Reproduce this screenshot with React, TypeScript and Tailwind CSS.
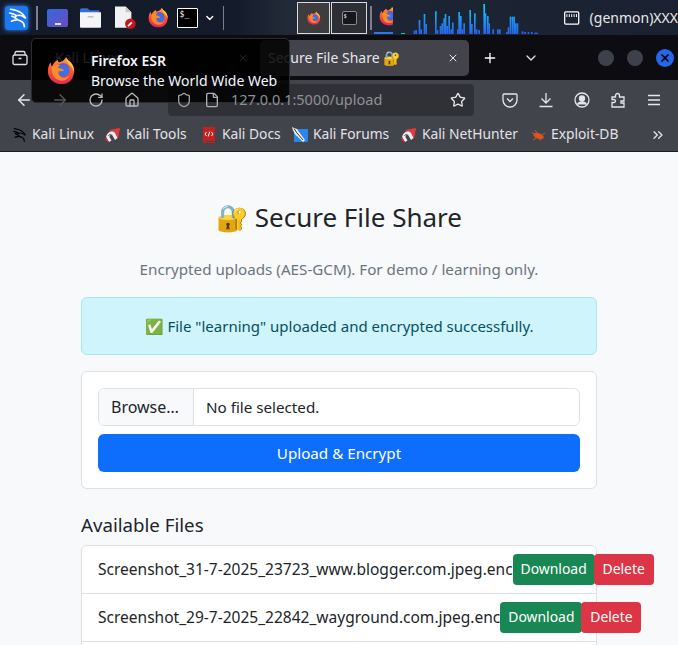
import { ArrowLeft, ArrowRight, ChevronDown, ChevronsRight, File, Home, Plus, RotateCw, Shield, Star, X } from 'lucide-react'

const bars: [number, number][] = [
  [128, 92], [133, 90], [143, 60], [148, 88], [158, 42], [163, 72], [192, 34], [197, 90], [206, 78], [211, 70],
  [217, 55], [221, 42], [226, 78], [232, 48], [238, 88], [243, 68], [258, 88], [262, 36], [267, 48], [272, 88],
  [277, 70], [295, 30], [300, 72], [309, 40], [314, 88], [322, 90], [337, 12], [341, 40], [348, 48], [352, 70],
  [364, 88], [378, 88], [384, 88], [405, 96], [410, 82], [416, 50], [422, 50], [427, 50], [432, 70], [437, 70],
  [452, 94], [460, 96], [470, 96], [480, 96], [490, 98], [495, 98],
]

const files = [
  'Screenshot_31-7-2025_23723_www.blogger.com.jpeg.enc',
  'Screenshot_29-7-2025_22842_wayground.com.jpeg.enc',
]

function Firefox({ size }: { size: number }) {
  return (
    <svg width={size} height={size} viewBox="0 0 32 32" className="shrink-0">
      <defs>
        <linearGradient id="fxBody" x1="0.5" y1="0" x2="0.4" y2="1">
          <stop offset="0" stopColor="#ffa52e" />
          <stop offset="0.45" stopColor="#ff5a2c" />
          <stop offset="1" stopColor="#e0245e" />
        </linearGradient>
      </defs>
      <path d="M21 1c1 3 3 4 5 6 4 4 5 10 3 15-2 6-7 9-13 9C8 31 1 25 1 17c0-4 1-7 3-10 0 2 .5 3.500 1.500 4.500C7 8 9 6 12 4.500c0 1.500.5 2 1.500 2.500C17 6 20 4 21 1z" fill="url(#fxBody)" />
      <path d="M21 1c1 3 3 4 5 6 3 3 4 7 4 11-1-3-3-7-6-9-1-2-3-4-3-8z" fill="#ffc53a" />
      <circle cx="17.500" cy="15.500" r="7.500" fill="#3f6fe0" />
      <path d="M17.500 8a7.500 7.500 0 0 1 7 5c-3-3-7-3.500-10-2.500-1-1-.5-2 3-2.500z" fill="#7a4bd0" />
      <path d="M5.500 11.500c3-1.500 6-2 9-1-1.500.5-2.500 1.500-2.500 2.500 3 .5 5.500 1.500 7 3-2 1-4 1-6 .5-1.500 4 2 7.500 6 7.500 2 0 4-1 6-3-1.500 4-5.500 7-10 6C8 26.500 4 19 5.500 11.500z" fill="#ff8a2a" />
    </svg>
  )
}

function KaliDragon({ className }: { className: string }) {
  return (
    <svg viewBox="0 0 24 24" fill="none" stroke="currentColor" strokeWidth="1.800" strokeLinecap="round" className={className}>
      <path d="M5 2.500c4 .5 8 1.500 11 3.500 2.500 1.500 4 3.500 5.500 6.500-2-2-4-3.500-7-3.500-2.500 0-4.500 1-4.500 2.500 0 2 3.500 2.500 6.500 4 2.500 1.200 3.500 3 3.500 6" />
      <path d="M4 6.500c3 .5 5.500 1.500 7.500 3M6.500 10c1 .3 2 .7 3 1.500M11 14.500c-2-.2-3.500 0-5 1" />
    </svg>
  )
}

function KaliTool() {
  return (
    <svg width="16" height="16" viewBox="0 0 16 16" className="shrink-0">
      <path d="M4 3l11-2-2 11-4-5z" fill="#de3b3f" />
      <path d="M1 10c1-5 6-7 9-4l2.500 5-2.500 2-2.500-4.500c-1-1-3-.5-3 1.500l2 3.500L4 15z" fill="#ededee" />
      <path d="M1 10l3 5-2-.5-2-2.500z" fill="#d43236" />
      <path d="M3.500 9c.5-1.500 2-2 3-1.500" stroke="#2b2b2f" strokeWidth="0.800" fill="none" />
    </svg>
  )
}

function BookmarkIcon({ kind }: { kind: string }) {
  if (kind === 'dragon') return <KaliDragon className="w-4 h-4 text-black shrink-0" />
  if (kind === 'tool') return <KaliTool />
  if (kind === 'docs')
    return (
      <svg width="16" height="16" viewBox="0 0 16 16" className="shrink-0">
        <path d="M2 0h12v14H4v1h10v1H3.500A1.500 1.500 0 0 1 2 14.500z" fill="#c3201f" />
        <path d="M5.500 5 4 7l1.500 2M10.500 5 12 7l-1.500 2M7.200 9.500 8.800 4.500" stroke="#fff" strokeWidth="1" fill="none" />
      </svg>
    )
  if (kind === 'forums')
    return (
      <svg width="16" height="16" viewBox="0 0 16 16" className="shrink-0">
        <path d="M2 2h14v11.500a1.500 1.500 0 0 1-1.500 1.500H2z" fill="#2d85ea" />
        <path d="M0 0c1 1 3 1 5 2 1 1 1 2 2 3l6 8-2 2-6-6C3 8 1 4 0 0z" fill="#f1f1f1" />
        <path d="M2 1.500 5 6l6 7" stroke="#202024" strokeWidth="0.900" fill="none" />
      </svg>
    )
  return (
    <svg width="16" height="16" viewBox="0 0 16 16" className="shrink-0">
      <ellipse cx="8.500" cy="9" rx="5.500" ry="2.800" fill="#d9541e" transform="rotate(20 8.500 9)" />
      <path d="M1.500 5l4 3M5 3l3 4M3 13l3-2M10 13.500l1-2.500M15 6l-3 2" stroke="#c9581f" strokeWidth="1" />
    </svg>
  )
}

function Bookmark({ kind, label, width }: { kind: string; label: string; width: string }) {
  return (
    <div className={`flex items-center gap-[5px] shrink-0 ${width}`}>
      <BookmarkIcon kind={kind} />
      <span className="text-[13.8px] text-[#e3e3e6] whitespace-nowrap">{label}</span>
    </div>
  )
}

function NavSlot({ children }: { children: React.ReactNode }) {
  return <div className="w-9 flex items-center justify-center text-[#e6e6e9]">{children}</div>
}

function Taskbar() {
  return (
    <div className="h-[35px] flex items-center bg-[linear-gradient(90deg,#131a28_0%,#141b2a_35%,#222a38_42%,#1d2433_60%,#1a2130_100%)] shrink-0">
      <div className="ml-[5px] w-6 h-6 rounded-[3px] bg-[#1c78ee] shadow-[0_0_5px_#2e8bff] flex items-center justify-center">
        <KaliDragon className="w-[22px] h-[22px] text-white" />
      </div>
      <div className="ml-[8px] w-[2px] h-[24px] bg-[#7c808a]" />
      <div className="ml-[9px] w-[22px] h-[18px] rounded-[2px] bg-[linear-gradient(135deg,#3568dc,#6a4cc0)] flex items-end justify-center">
        <span className="w-[6px] h-[2px] mb-[2px] bg-white/80" />
      </div>
      <svg width="22" height="20" viewBox="0 0 22 20" className="ml-[12px]">
        <path d="M0 2a2 2 0 0 1 2-2h6l2 2h10v3H0z" fill="#2f6fdb" />
        <path d="M0 4h22v15a1 1 0 0 1-1 1H1a1 1 0 0 1-1-1z" fill="#f4f5f6" />
        <path d="M8 8h6v1.500H8z" fill="#b8bcc2" />
      </svg>
      <svg width="22" height="24" viewBox="0 0 22 24" className="ml-[14px]">
        <path d="M0 0h11l6 6v16H0z" fill="#f2f2f2" />
        <path d="M11 0l6 6h-6z" fill="#c8c8c8" />
        <circle cx="16" cy="18" r="5.500" fill="#c5161d" />
        <path d="M13.500 20.500l4-4" stroke="#fff" strokeWidth="1.800" />
      </svg>
      <div className="ml-[11px]"><Firefox size={21} /></div>
      <div className="ml-[8px] w-[22px] h-[20px] bg-black border border-white rounded-[1px] text-[8px] leading-[12px] text-white pl-[2px] font-['DejaVu_Sans_Mono',monospace]">$_</div>
      <ChevronDown className="ml-[6px] w-[12px] h-[12px] text-white" strokeWidth={3} />
      <div className="ml-[7px] w-[2px] h-[24px] bg-[#7c808a]" />
      <div className="ml-[73px] w-[34px] h-[32px] border border-[#d8d8d8] bg-[#3d3d40] flex items-center justify-center">
        <Firefox size={14} />
      </div>
      <div className="ml-[1px] w-[37px] h-[32px] border border-[#d8d8d8] bg-[#2d2f35] flex items-center justify-center">
        <div className="w-[15px] h-[14px] bg-[#15171a] border border-[#8a8a8a] rounded-[2px] text-[5px] leading-[8px] text-white pl-[1px]">$</div>
      </div>
      <div className="ml-[3px] w-[2px] h-[24px] bg-[#7c808a]" />
      <div className="ml-[2px] w-[20px] h-[35px] flex flex-col items-end justify-between overflow-hidden">
        <div className="mt-[6px] w-[14px] overflow-hidden"><Firefox size={20} /></div>
        <div className="w-[20px] h-[2px] mb-px bg-[#2a78ea]" />
      </div>
      <svg width="158" height="35" viewBox="66 0 474 105" className="shrink-0">
        <defs>
          <linearGradient id="cpu" gradientUnits="userSpaceOnUse" x1="0" y1="12" x2="0" y2="102">
            <stop offset="0" stopColor="#07d8e8" />
            <stop offset="0.6" stopColor="#1f8cf5" />
            <stop offset="1" stopColor="#2a62ea" />
          </linearGradient>
        </defs>
        <rect x="90" y="99" width="12" height="3" fill="#12c8a8" />
        {bars.map(([x, top]) => (
          <rect key={x} x={x} y={top} width="5" height={102 - top} fill="url(#cpu)" />
        ))}
      </svg>
      <svg width="16" height="14" viewBox="0 0 16 14" className="ml-[13px]" fill="none" stroke="#fff" strokeWidth="1.300">
        <rect x="0.700" y="0.700" width="14.600" height="12.600" rx="1" />
        <path d="M3 3v3M5.500 3v3M8 3v3M10.500 3v3M13 3v3" strokeWidth="1" />
      </svg>
      <span className="ml-[10px] text-[14px] text-[#e8e8ea] whitespace-nowrap">(genmon)XXX</span>
    </div>
  )
}

function TabBar() {
  return (
    <div className="h-[45px] flex items-center bg-[#0c0c11] text-[#dcdce0] shrink-0">
      <svg width="16" height="16" viewBox="0 0 16 16" className="ml-[12px]" fill="none" stroke="#e0e0e4" strokeWidth="1.300">
        <rect x="1" y="5" width="14" height="9.500" rx="1.500" />
        <path d="M3 5V3a1.500 1.500 0 0 1 1.500-1.500h7A1.500 1.500 0 0 1 13 3v2M6.500 8.500h3" />
      </svg>
      <div className="ml-[5px] w-[224px] h-9 flex items-center justify-between pl-[22px] pr-[8px]">
        <span className="text-[14px] text-[#d0d0d4]">Kali Linux</span>
        <X className="w-3 h-3 text-[#d0d0d4]" />
      </div>
      <div className="ml-[3px] w-[209px] h-9 rounded-[5px] bg-[#42434b] flex items-center pl-[8px] pr-[10px]">
        <span className="text-[14px] text-[#e6e6ea] whitespace-nowrap">Secure File Share 🔐</span>
        <X className="ml-auto w-3 h-3 text-[#e6e6ea]" />
      </div>
      <Plus className="ml-[13px] w-4 h-4 text-white" />
      <ChevronDown className="ml-[25px] w-4 h-4 text-[#e0e0e4]" />
      <div className="ml-[59px] w-4 h-4 rounded-full bg-[#3e414c]" />
      <div className="ml-[13px] w-4 h-4 rounded-full bg-[#3e414c]" />
      <div className="ml-[13px] w-[18px] h-[18px] rounded-full bg-[#2567e8] flex items-center justify-center">
        <X className="w-3 h-3 text-black" strokeWidth={3.500} />
      </div>
    </div>
  )
}

function NavBar() {
  return (
    <div className="h-[38px] pt-[2px] flex items-center bg-[#42444c] shrink-0">
      <div className="ml-[6px] flex">
        <NavSlot><ArrowLeft className="w-[18px] h-[18px]" /></NavSlot>
        <NavSlot><ArrowRight className="relative z-10 w-[18px] h-[18px] text-[#55565a]" /></NavSlot>
        <NavSlot><RotateCw className="relative z-10 w-4 h-4 text-[#b8b8bc]" /></NavSlot>
        <NavSlot><Home className="relative z-10 w-4 h-4 text-[#b8b8bc]" /></NavSlot>
      </div>
      <div className="ml-[18px] w-[306px] h-8 rounded-[4px] bg-[#303137] flex items-center pl-[8px] pr-[8px]">
        <Shield className="relative z-10 w-4 h-4 text-[#a0a0a4]" />
        <File className="relative z-10 ml-[12px] w-4 h-4 text-[#b0b0b4]" />
        <span className="relative z-10 ml-[11px] text-[14.5px] text-[#8f9095]">127.0.0.1:5000/upload</span>
        <Star className="ml-auto w-4 h-4 text-[#e6e6e9]" />
      </div>
      <div className="ml-[18px] flex">
        <NavSlot>
          <svg width="16" height="16" viewBox="0 0 16 16" fill="none" stroke="currentColor" strokeWidth="1.300">
            <path d="M2 2h12a1 1 0 0 1 1 1v5a7 7 0 0 1-14 0V3a1 1 0 0 1 1-1z" />
            <path d="M5 6.500l3 3 3-3" />
          </svg>
        </NavSlot>
        <NavSlot>
          <svg width="16" height="16" viewBox="0 0 16 16" fill="none" stroke="currentColor" strokeWidth="1.300">
            <path d="M8 1v9.500M3.500 6.500 8 11l4.500-4.500M1.500 14.500h13" />
          </svg>
        </NavSlot>
        <NavSlot>
          <svg width="16" height="16" viewBox="0 0 16 16" fill="none" stroke="currentColor" strokeWidth="1.300">
            <circle cx="8" cy="8" r="7" />
            <circle cx="8" cy="6.500" r="2.500" fill="currentColor" />
            <path d="M3.500 12.500c1-2 3-2.500 4.500-2.500s3.500.5 4.500 2.500" fill="currentColor" />
          </svg>
        </NavSlot>
        <NavSlot>
          <svg width="16" height="16" viewBox="0 0 16 16" fill="none" stroke="currentColor" strokeWidth="1.300">
            <path d="M2 5h3.500V3.500a2 2 0 0 1 4 0V5H14v4h-3v2h3v4H2v-4.500h2a1.500 1.500 0 0 0 0-3H2z" />
          </svg>
        </NavSlot>
        <NavSlot>
          <svg width="16" height="16" viewBox="0 0 16 16" fill="none" stroke="currentColor" strokeWidth="1.300">
            <path d="M2 3.500h12M2 8h12M2 12.500h12" />
          </svg>
        </NavSlot>
      </div>
    </div>
  )
}

function Bookmarks() {
  return (
    <div className="h-[34px] flex items-center pl-[11px] bg-[#42444c] border-b border-[#1c1c20] shrink-0">
      <Bookmark kind="dragon" label="Kali Linux" width="w-[94px]" />
      <Bookmark kind="tool" label="Kali Tools" width="w-[96px]" />
      <Bookmark kind="docs" label="Kali Docs" width="w-[91px]" />
      <Bookmark kind="forums" label="Kali Forums" width="w-[109px]" />
      <Bookmark kind="tool" label="Kali NetHunter" width="w-[129px]" />
      <Bookmark kind="bug" label="Exploit-DB" width="w-[120px]" />
      <ChevronsRight className="w-4 h-4 text-[#e3e3e6]" />
    </div>
  )
}

export default function App() {
  return (
    <div className="relative w-[678px] h-[645px] overflow-hidden flex flex-col font-['Noto_Sans',sans-serif]">
      <Taskbar />
      <TabBar />
      <NavBar />
      <Bookmarks />
      <main className="flex-1 bg-[#f8f9fa] px-[81px] pt-[47px]">
        <h1 className="text-[26px] leading-[36px] text-[#212529] text-center">🔐 Secure File Share</h1>
        <p className="mt-[24px] text-[15.2px] leading-[21px] text-[#6c757d] text-center">Encrypted uploads (AES-GCM). For demo / learning only.</p>
        <div className="mt-[17px] h-[58px] rounded-[6px] border border-[#9eeaf9] bg-[#cff4fc] text-[#055160] text-[15px] flex items-center justify-center">
          ✅ File "learning" uploaded and encrypted successfully.
        </div>
        <div className="mt-[16px] rounded-[6px] border border-[#dee2e6] bg-white p-4">
          <div className="h-[38px] rounded-[6px] border border-[#dee2e6] flex items-center text-[15.2px] text-[#212529] overflow-hidden">
            <div className="h-full w-[95px] pl-3 flex items-center bg-[#f8f9fa] border-r border-[#dee2e6] whitespace-nowrap text-[16px]">Browse…</div>
            <span className="ml-3">No file selected.</span>
          </div>
          <button className="mt-2 w-full h-[38px] rounded-[6px] bg-[#0d6efd] text-white text-[15.2px]">Upload &amp; Encrypt</button>
        </div>
        <h2 className="mt-[24px] text-[18.7px] leading-[24px] text-[#212529]">Available Files</h2>
        <ul className="mt-[8px] rounded-t-[6px] border border-[#dee2e6] bg-white">
          {files.map((name) => (
            <li key={name} className="h-[48px] px-4 flex items-center border-b border-[#dee2e6] text-[15.53px] text-[#212529]">
              <span className="whitespace-nowrap shrink-0">{name}</span>
              <button className="shrink-0 h-[31px] px-2 rounded-[4px] bg-[#198754] text-white text-[13.9px]">Download</button>
              <button className="shrink-0 -ml-px w-[60px] h-[31px] rounded-[4px] bg-[#dc3545] text-white text-[13.9px]">Delete</button>
            </li>
          ))}
          <li className="h-[48px]" />
        </ul>
      </main>
      <div className="absolute left-[31px] top-[38px] w-[259px] h-[65px] rounded-[5px] bg-black/85 border border-[#2c2c30] flex items-center pl-[15px]">
        <Firefox size={29} />
        <div className="ml-[15px] text-[14px] leading-[20px] text-[#f2f6ff]">
          <div className="font-semibold">Firefox ESR</div>
          <div>Browse the World Wide Web</div>
        </div>
      </div>
    </div>
  )
}
